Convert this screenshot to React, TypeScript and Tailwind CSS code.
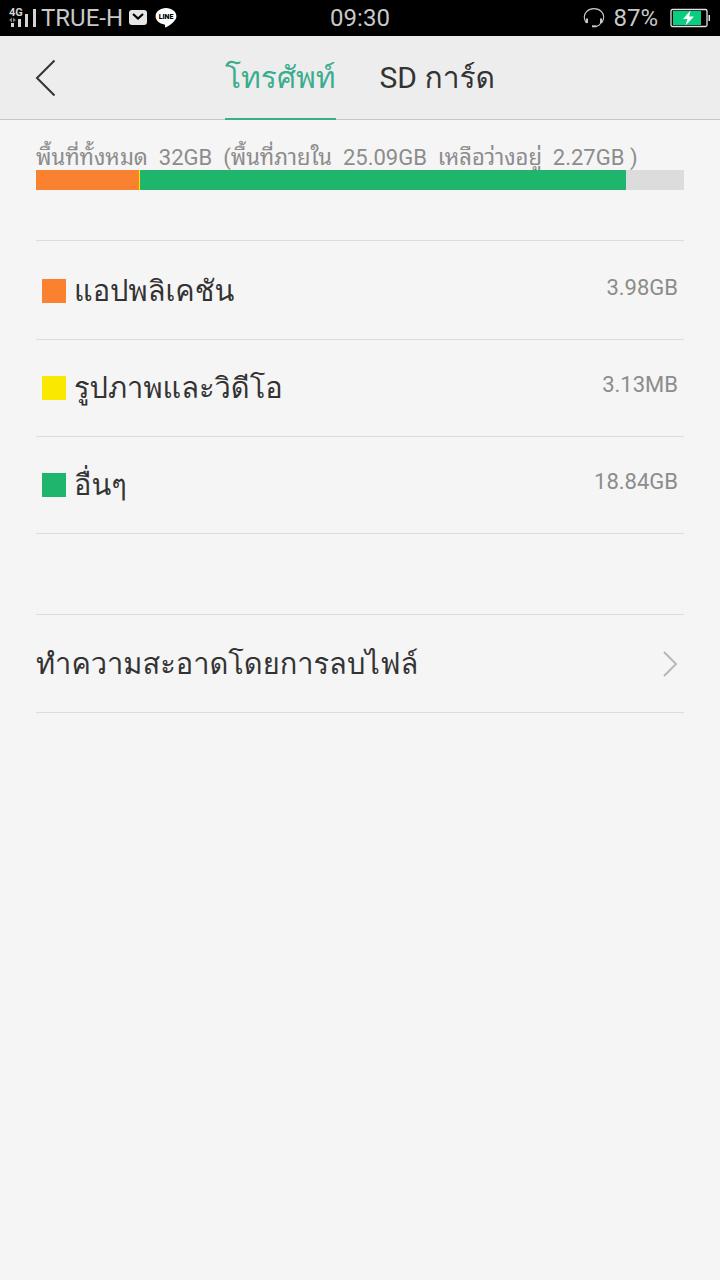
import React, { useState } from "react";

const TOTAL_GB = 25.09;

const categories = [
    { id: "apps", label: "แอปพลิเคชัน", size: "3.98GB", gb: 3.98, color: "bg-[#fa812f]" },
    { id: "media", label: "รูปภาพและวิดีโอ", size: "3.13MB", gb: 0.003, color: "bg-[#fbe800]" },
    { id: "other", label: "อื่นๆ", size: "18.84GB", gb: 18.84, color: "bg-[#1fb56c]" },
];

const tabs = ["โทรศัพท์", "SD การ์ด"];

const SignalIcon: React.FC = () => (
    <svg width="28" height="22" viewBox="0 0 28 22" fill="#d4d4d4" aria-hidden="true">
        <text x="0" y="9" fontSize="11" fontWeight="700" fontFamily="Roboto, sans-serif">4G</text>
        <path d="M2 16h3v4H2zM9 12h3v8H9zM16 7h3v13h-3zM24 2h3v18h-3z" />
        <path d="M0 13l3-2.500v5zM7 13l-3-2.500v5z" opacity=".6" />
    </svg>
);

const MailIcon: React.FC = () => (
    <svg width="18" height="16" viewBox="0 0 18 16" aria-hidden="true">
        <rect width="18" height="15" rx="3" fill="#e6e6e6" />
        <path d="M4 4l5 4.500L14 4" fill="none" stroke="#000" strokeWidth="2.200" />
    </svg>
);

const LineIcon: React.FC = () => (
    <svg width="22" height="22" viewBox="0 0 22 22" aria-hidden="true">
        <path d="M11 1C5.200 1 .6 4.600.6 9.300c0 4.200 4 7.500 8.800 8.100 1 .2.700 1.300.6 2.400 0 .7.400.8 1 .5 2.200-1.200 6.300-3.800 8.300-6.400 1.400-1.500 2.100-2.900 2.100-4.600C21.400 4.600 16.800 1 11 1z" fill="#fff" />
        <text x="11" y="12" fontSize="7" fontWeight="900" textAnchor="middle" fontFamily="Roboto, sans-serif">LINE</text>
    </svg>
);

const HeadsetIcon: React.FC = () => (
    <svg width="22" height="22" viewBox="0 0 22 22" fill="none" stroke="#c8c8c8" aria-hidden="true">
        <path d="M3.500 16C.5 12 .8 7.500 3.500 4.600 7.500.6 14.500.6 18.500 4.600c2.700 2.900 3 7.400 0 11.400" strokeWidth="1.300" />
        <path d="M4 11.500v4.500M18 11.500v4.500" strokeWidth="2" />
        <path d="M18 16c-1.500 2.200-3.200 3.300-5 3.500" strokeWidth="1.200" />
        <path d="M9 19.300h4.500" strokeWidth="2" />
    </svg>
);

const BatteryIcon: React.FC = () => (
    <svg width="41" height="20" viewBox="0 0 41 20" aria-hidden="true">
        <rect x="1" y="1.500" width="36" height="17" rx="1.500" fill="none" stroke="#e2e2e2" strokeWidth="1.300" />
        <rect x="3" y="3" width="28" height="14" fill="#08cf80" />
        <path d="M38.500 7h1.500v6h-1.500z" fill="#e2e2e2" />
        <path d="M20.500 2.500l-7.500 8.500h4.500l-2 6.500 8.500-9h-4.800z" fill="#fff" />
    </svg>
);

const StatusBar: React.FC = () => (
    <div className="grid h-9 grid-cols-[1fr_auto_1fr] items-center bg-black px-[9px] text-2xl text-[#c8c8c8]">
        <div className="flex items-center">
            <SignalIcon />
            <span className="ml-1">TRUE-H</span>
            <span className="ml-1.5"><MailIcon /></span>
            <span className="ml-2"><LineIcon /></span>
        </div>
        <span>09:30</span>
        <div className="flex items-center justify-end">
            <HeadsetIcon />
            <span className="ml-2">87%</span>
            <span className="ml-3"><BatteryIcon /></span>
        </div>
    </div>
);

const StorageBar: React.FC = () => (
    <div className="flex h-5 bg-[#dcdcdc]">
        {categories.map((item) => (
            <div
                key={item.id}
                className={`min-w-px ${item.color}`}
                style={{ width: `${(item.gb / TOTAL_GB) * 100}%` }}
            />
        ))}
    </div>
);

const App: React.FC = () => {
    const [activeTab, setActiveTab] = useState(tabs[0]);

    return (
        <div className="min-h-screen bg-[#f5f5f5] font-[Roboto,Loma,'Noto_Sans',sans-serif] text-[#333]">
            <StatusBar />

            <header className="grid h-21 grid-cols-[1fr_auto_1fr] border-b border-[#c6c6c6] bg-[#ededed]">
                <button type="button" aria-label="ย้อนกลับ" className="flex items-center justify-self-start pl-8.5">
                    <svg width="24" height="40" viewBox="0 0 24 40" fill="none" stroke="#333" strokeWidth="2">
                        <path d="M20.500 2.500L3 20l17.500 17.500" />
                    </svg>
                </button>
                <nav className="flex gap-11">
                    {tabs.map((tab) => (
                        <button
                            key={tab}
                            type="button"
                            onClick={() => setActiveTab(tab)}
                            className={`-mb-px border-b-2 pt-0.5 text-3xl ${activeTab === tab ? "border-[#3bad8f] text-[#3bad8f]" : "border-transparent"}`}
                        >
                            {tab}
                        </button>
                    ))}
                </nav>
            </header>

            <main className="px-9 pt-6">
                {/* Storage summary */}
                <p className="h-6.5 font-[Roboto,'Noto_Sans_Thai_Looped',Loma,sans-serif] text-[22px] leading-7 whitespace-pre text-[#8c8c8c]">
                    {"พื้นที่ทั้งหมด  32GB  (พื้นที่ภายใน  25.09GB  เหลือว่างอยู่  2.27GB )"}
                </p>
                <StorageBar />

                {/* Usage by category */}
                <ul className="mt-12.5 border-t border-[#dcdcdc] pt-0.5">
                    {categories.map((item) => (
                        <li key={item.id} className="flex h-[97px] items-center border-b border-[#dcdcdc] px-1.5">
                            <span className={`size-6 ${item.color}`} />
                            <span className="mt-0.5 ml-2 text-[29px]">{item.label}</span>
                            <span className="mb-2 ml-auto text-[22px] text-[#8c8c8c]">{item.size}</span>
                        </li>
                    ))}
                </ul>

                <button
                    type="button"
                    className="mt-20 flex h-[99px] w-full items-center justify-between border-y border-[#dcdcdc] pr-1 text-[29px]"
                >
                    <span className="mt-0.5">ทำความสะอาดโดยการลบไฟล์</span>
                    <svg width="20" height="30" viewBox="0 0 20 30" fill="none" stroke="#b8b8b8" strokeWidth="2" aria-hidden="true">
                        <path d="M4 3l12 12L4 27" />
                    </svg>
                </button>
            </main>
        </div>
    );
};

export default App;
